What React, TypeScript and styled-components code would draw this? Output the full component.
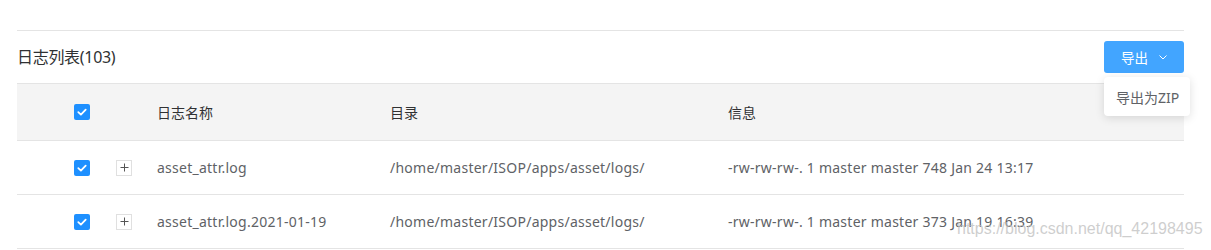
import React from "react";
import styled, { createGlobalStyle } from "styled-components";

const Global = createGlobalStyle`
  html, body { margin: 0; padding: 0; background: #fff; }
  body { font-family: "Noto Sans", "Noto Sans CJK SC", sans-serif; }
`;

const Page = styled.div`
  position: relative;
  padding: 30px 27px 0 17px;
  height: 250px;
  box-sizing: border-box;
  overflow: hidden;
`;

const TitleBar = styled.div`
  position: relative;
  display: flex;
  align-items: center;
  justify-content: space-between;
  height: 52px;
  border-top: 1px solid #e4e4e4;
`;

const Title = styled.div`
  font-size: 16px;
  color: #303133;
  letter-spacing: -0.3px;
  margin-bottom: 2px;
`;

const ExportWrap = styled.div`
  position: relative;
  align-self: flex-start;
  margin-top: 10px;
`;

const ExportButton = styled.button`
  width: 80px;
  height: 32px;
  border: none;
  border-radius: 3px;
  background: #42a5ff;
  color: #fff;
  font-family: inherit;
  font-size: 13.5px;
  display: flex;
  align-items: center;
  justify-content: center;
  gap: 11px;
  padding: 0;
`;

const Menu = styled.div`
  position: absolute;
  top: 36px;
  left: 0;
  width: 86px;
  height: 39px;
  background: #fff;
  border-radius: 4px;
  box-shadow: 0 2px 10px rgba(0, 0, 0, 0.13);
  display: flex;
  align-items: center;
  padding-left: 12px;
  box-sizing: border-box;
  font-size: 14px;
  color: #606266;
  z-index: 2;
`;

const Table = styled.div`
  border-top: 1px solid #e4e4e4;
`;

const Row = styled.div<{ $header?: boolean }>`
  display: grid;
  grid-template-columns: 87px 41px 233px 338px 1fr;
  align-items: center;
  height: ${(p) => (p.$header ? 56 : 53)}px;
  background: ${(p) => (p.$header ? "#f4f4f4" : "#fff")};
  border-bottom: 1px solid #e4e4e4;
  font-size: 14px;
  letter-spacing: ${(p) => (p.$header ? 0 : 0.25)}px;
  color: ${(p) => (p.$header ? "#303133" : "#606266")};
`;

const CheckCell = styled.div`
  display: flex;
  justify-content: flex-end;
  padding-right: 14px;
`;

const ExpandCell = styled.div`
  display: flex;
  justify-content: flex-start;
  padding-left: 12px;
`;

const TextCell = styled.div`
  padding-left: 12px;
  white-space: nowrap;
`;

const Check = styled.span`
  width: 16px;
  height: 16px;
  border-radius: 2px;
  background: #1e90ff;
  display: inline-flex;
  align-items: center;
  justify-content: center;
`;

const PlusBox = styled.span`
  width: 16px;
  height: 16px;
  border: 1px solid #e0e0e0;
  box-sizing: border-box;
  display: inline-flex;
  align-items: center;
  justify-content: center;
`;

const Watermark = styled.div`
  position: absolute;
  left: 957px;
  top: 220px;
  font-family: "Liberation Sans", Arial, sans-serif;
  font-size: 16px;
  color: rgba(190, 190, 190, 0.75);
  pointer-events: none;
`;

const CheckIcon = () => (
  <svg width="10" height="8" viewBox="0 0 10 8">
    <path d="M1.3 4.2 L3.9 6.6 L8.7 1.6" stroke="#fff" strokeWidth="1.8" fill="none" strokeLinecap="round" strokeLinejoin="round" />
  </svg>
);

const PlusIcon = () => (
  <svg width="9" height="9" viewBox="0 0 9 9">
    <path d="M4.5 0.5 V8.5 M0.5 4.5 H8.5" stroke="#555" strokeWidth="1" />
  </svg>
);

const Chevron = () => (
  <svg width="8" height="5" viewBox="0 0 8 5">
    <path d="M0.5 0.5 L4 4 L7.5 0.5" stroke="#fff" strokeWidth="1" fill="none" />
  </svg>
);

const rows = [
  {
    name: "asset_attr.log",
    dir: "/home/master/ISOP/apps/asset/logs/",
    info: "-rw-rw-rw-. 1 master master 748 Jan 24 13:17",
  },
  {
    name: "asset_attr.log.2021-01-19",
    dir: "/home/master/ISOP/apps/asset/logs/",
    info: "-rw-rw-rw-. 1 master master 373 Jan 19 16:39",
  },
];

export default function App() {
  return (
    <>
      <Global />
      <Page>
        <TitleBar>
          <Title>日志列表(103)</Title>
          <ExportWrap>
            <ExportButton>
              导出
              <Chevron />
            </ExportButton>
            <Menu>导出为ZIP</Menu>
          </ExportWrap>
        </TitleBar>
        <Table>
          <Row $header>
            <CheckCell>
              <Check>
                <CheckIcon />
              </Check>
            </CheckCell>
            <ExpandCell />
            <TextCell>日志名称</TextCell>
            <TextCell>目录</TextCell>
            <TextCell>信息</TextCell>
          </Row>
          {rows.map((r) => (
            <Row key={r.name}>
              <CheckCell>
                <Check>
                  <CheckIcon />
                </Check>
              </CheckCell>
              <ExpandCell>
                <PlusBox>
                  <PlusIcon />
                </PlusBox>
              </ExpandCell>
              <TextCell>{r.name}</TextCell>
              <TextCell>{r.dir}</TextCell>
              <TextCell>{r.info}</TextCell>
            </Row>
          ))}
        </Table>
        <Watermark>https://blog.csdn.net/qq_42198495</Watermark>
      </Page>
    </>
  );
}
